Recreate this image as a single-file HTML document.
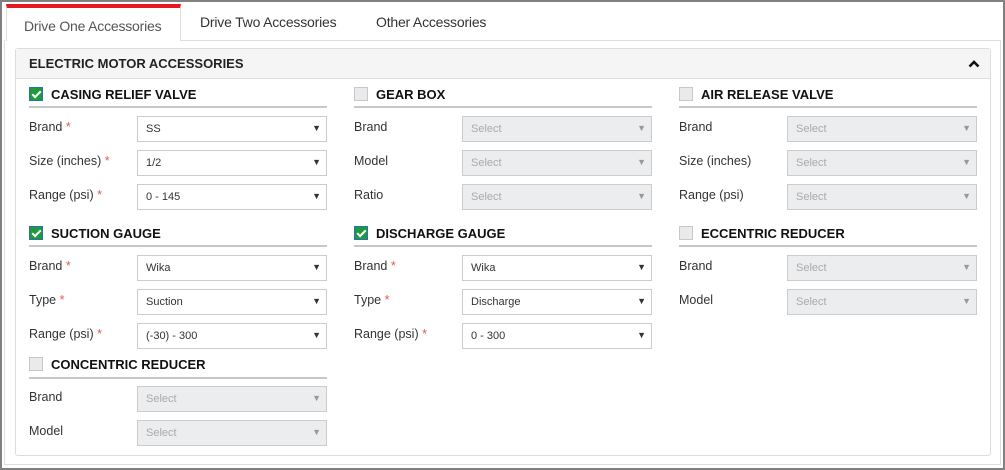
<!DOCTYPE html>
<html><head><meta charset="utf-8"><style>
*{box-sizing:border-box;margin:0;padding:0}
body{width:1005px;height:470px;overflow:hidden;background:#fff;font-family:"Liberation Sans",sans-serif;position:relative}
.frame{position:absolute;left:0;top:0;width:1005px;height:470px;border:2px solid #808080}
.inner{position:absolute;left:4px;top:40px;width:997px;height:425px;border:1px solid #ddd;border-top:none}
.tabline{position:absolute;left:6px;top:40px;width:995px;height:1px;background:#ddd}
.tab{position:absolute;top:10px;font-size:14px;color:#333;letter-spacing:-0.2px}
.atab{position:absolute;left:6px;top:4px;width:175px;height:37px;background:#fff;border:1px solid #ddd;border-bottom:none;border-top:4px solid #e8161e;font-size:14px;color:#555;padding:10px 0 0 17px;letter-spacing:-0.2px}
.panel{position:absolute;left:15px;top:48px;width:976px;height:408px;border:1px solid #ddd;border-radius:3px}
.ph{position:absolute;left:0;top:0;width:100%;height:30px;background:#f5f5f5;border-bottom:1px solid #ddd;font-weight:bold;font-size:13px;color:#222;padding:7px 0 0 13px}
.car{position:absolute;right:10px;top:10px}
.cb{position:absolute;width:14px;height:14px;border:1px solid #c8c8c8;background:#e8eaec}
.cb.on{background:#1f9a3b;border-color:#2a6fb8}
.cb.on:after{content:"";position:absolute;left:4px;top:1px;width:3px;height:7px;border:solid #fff;border-width:0 2px 2px 0;transform:rotate(45deg)}
.t{position:absolute;font-weight:bold;font-size:13px;color:#111}
.hr{position:absolute;width:298px;height:2px;background:#c8c8c8}
.l{position:absolute;font-size:12.5px;color:#333}
.l i{font-style:normal;color:#e05a5a}
.s{position:absolute;width:190px;height:26px;border:1px solid #ccc;background:#fff;font-size:11px;color:#333;padding:6px 0 0 8px}
.s:after{content:"▼";position:absolute;right:5px;top:6px;font-size:9px;color:#333}
.s.d{background:#ebedef;color:#aaa}
.s.d:after{color:#999}
</style></head><body>
<div class="frame"></div>
<div class="inner"></div>
<div class="tabline"></div>
<div class="atab">Drive One Accessories</div>
<div class="tab" style="left:200px;top:14px">Drive Two Accessories</div>
<div class="tab" style="left:376px;top:14px">Other Accessories</div>
<div style="position:absolute;left:181px;top:40px;width:326px;height:1px;background:#ddd"></div>
<div class="panel"><div class="ph">ELECTRIC MOTOR ACCESSORIES<svg class="car" width="12" height="9" viewBox="0 0 12 9"><path d="M1.5 7.5 L6 3 L10.5 7.5" fill="none" stroke="#111" stroke-width="2.6"/></svg></div></div>

<!-- col1 -->
<div class="cb on" style="left:29px;top:87px"></div><div class="t" style="left:51px;top:87px">CASING RELIEF VALVE</div>
<div class="hr" style="left:29px;top:106px"></div>
<div class="l" style="left:29px;top:120px">Brand <i>*</i></div><div class="s" style="left:137px;top:116px">SS</div>
<div class="l" style="left:29px;top:154px">Size (inches) <i>*</i></div><div class="s" style="left:137px;top:150px">1/2</div>
<div class="l" style="left:29px;top:188px">Range (psi) <i>*</i></div><div class="s" style="left:137px;top:184px">0 - 145</div>

<div class="cb on" style="left:29px;top:226px"></div><div class="t" style="left:51px;top:226px">SUCTION GAUGE</div>
<div class="hr" style="left:29px;top:245px"></div>
<div class="l" style="left:29px;top:259px">Brand <i>*</i></div><div class="s" style="left:137px;top:255px">Wika</div>
<div class="l" style="left:29px;top:293px">Type <i>*</i></div><div class="s" style="left:137px;top:289px">Suction</div>
<div class="l" style="left:29px;top:327px">Range (psi) <i>*</i></div><div class="s" style="left:137px;top:323px">(-30) - 300</div>

<div class="cb" style="left:29px;top:357px"></div><div class="t" style="left:51px;top:357px">CONCENTRIC REDUCER</div>
<div class="hr" style="left:29px;top:377px"></div>
<div class="l" style="left:29px;top:390px">Brand</div><div class="s d" style="left:137px;top:386px">Select</div>
<div class="l" style="left:29px;top:424px">Model</div><div class="s d" style="left:137px;top:420px">Select</div>

<!-- col2 -->
<div class="cb" style="left:354px;top:87px"></div><div class="t" style="left:376px;top:87px">GEAR BOX</div>
<div class="hr" style="left:354px;top:106px"></div>
<div class="l" style="left:354px;top:120px">Brand</div><div class="s d" style="left:462px;top:116px">Select</div>
<div class="l" style="left:354px;top:154px">Model</div><div class="s d" style="left:462px;top:150px">Select</div>
<div class="l" style="left:354px;top:188px">Ratio</div><div class="s d" style="left:462px;top:184px">Select</div>

<div class="cb on" style="left:354px;top:226px"></div><div class="t" style="left:376px;top:226px">DISCHARGE GAUGE</div>
<div class="hr" style="left:354px;top:245px"></div>
<div class="l" style="left:354px;top:259px">Brand <i>*</i></div><div class="s" style="left:462px;top:255px">Wika</div>
<div class="l" style="left:354px;top:293px">Type <i>*</i></div><div class="s" style="left:462px;top:289px">Discharge</div>
<div class="l" style="left:354px;top:327px">Range (psi) <i>*</i></div><div class="s" style="left:462px;top:323px">0 - 300</div>

<!-- col3 -->
<div class="cb" style="left:679px;top:87px"></div><div class="t" style="left:701px;top:87px">AIR RELEASE VALVE</div>
<div class="hr" style="left:679px;top:106px"></div>
<div class="l" style="left:679px;top:120px">Brand</div><div class="s d" style="left:787px;top:116px">Select</div>
<div class="l" style="left:679px;top:154px">Size (inches)</div><div class="s d" style="left:787px;top:150px">Select</div>
<div class="l" style="left:679px;top:188px">Range (psi)</div><div class="s d" style="left:787px;top:184px">Select</div>

<div class="cb" style="left:679px;top:226px"></div><div class="t" style="left:701px;top:226px">ECCENTRIC REDUCER</div>
<div class="hr" style="left:679px;top:245px"></div>
<div class="l" style="left:679px;top:259px">Brand</div><div class="s d" style="left:787px;top:255px">Select</div>
<div class="l" style="left:679px;top:293px">Model</div><div class="s d" style="left:787px;top:289px">Select</div>
</body></html>
